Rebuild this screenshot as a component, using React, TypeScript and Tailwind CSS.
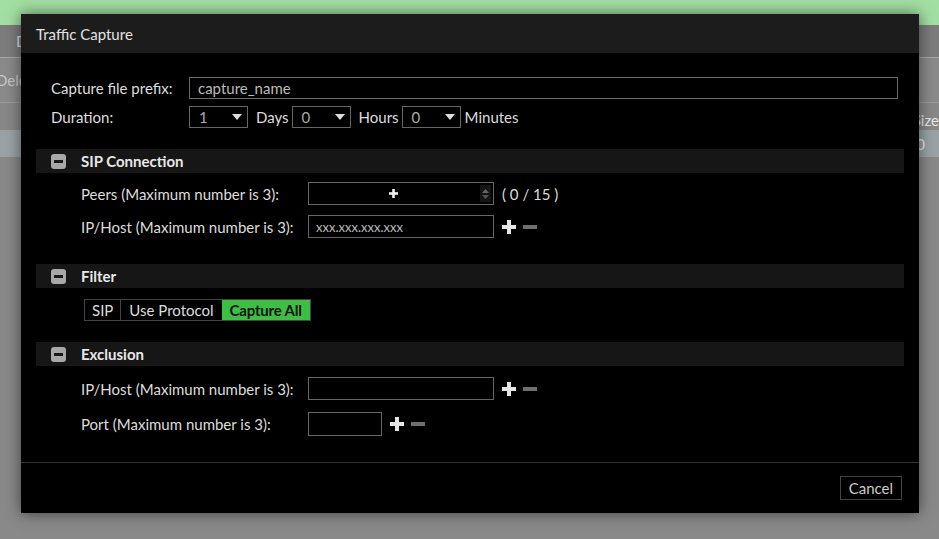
import React from 'react';

const font = { fontFamily: 'Lato, "Open Sans", sans-serif' };

function Caret() {
  return (
    <svg width="10" height="6" viewBox="0 0 10 6" className="text-[#ddd]">
      <path d="M0 0 L10 0 L5 6 Z" fill="currentColor" />
    </svg>
  );
}

function Select({ value }: { value: string }) {
  return (
    <div className="flex h-[22px] w-[59px] items-center justify-between border border-[#666] pl-[9px] pr-[5px] text-[#aaa]">
      <span>{value}</span>
      <Caret />
    </div>
  );
}

function PlusMinus() {
  return (
    <div className="ml-[8px] flex items-center gap-[7px]">
      <svg width="14" height="14" viewBox="0 0 14 14">
        <rect x="5" y="0" width="4" height="14" fill="#e5e5e5" />
        <rect x="0" y="5" width="14" height="4" fill="#e5e5e5" />
      </svg>
      <svg width="14" height="14" viewBox="0 0 14 14">
        <rect x="0" y="5" width="14" height="4" fill="#6f6f6f" />
      </svg>
    </div>
  );
}

function SectionHeader({ title }: { title: string }) {
  return (
    <div className="flex h-[24px] items-center bg-[#161616] pl-[15px]">
      <div className="flex h-[15px] w-[15px] items-center justify-center rounded-[3px] bg-[#a8a8a8]">
        <div className="h-[3px] w-[9px] bg-[#1a1a1a]" />
      </div>
      <span className="ml-[15px] font-bold text-[#e8e8e8]">{title}</span>
    </div>
  );
}

function Row({ label, children, className = '' }: { label: string; children: React.ReactNode; className?: string }) {
  return (
    <div className={`flex items-center pl-[45px] ${className}`}>
      <span className="w-[227px] text-[#ddd]">{label}</span>
      {children}
    </div>
  );
}

export default function App() {
  return (
    <div className="relative h-[539px] w-[939px] overflow-hidden bg-[#898989] text-[15px] leading-[20px]" style={font}>
      {/* page behind the overlay */}
      <div className="h-[25px] bg-[#a2dfa2]" />
      <div className="flex h-[32px] items-center bg-[#7c7c7c] pl-[16px] text-[#e0e0e0]">D</div>
      <div className="h-px bg-[#a9a9a9]" />
      <div className="flex h-[44px] items-center bg-[#8a8a8a] text-[#c8c8c8]">
        <span className="-ml-[4px]">Dele</span>
      </div>
      <div className="h-px bg-[#9c9c9c]" />
      <div className="flex h-[27px] items-end justify-end bg-[#888] text-[#e8e8e8]">
        <span>Size</span>
      </div>
      <div className="flex h-[27px] items-center justify-end bg-[#99a3a6] pr-[14px] text-[#e8e8e8]">
        <span>0</span>
      </div>

      {/* dialog */}
      <div className="absolute left-[21px] top-[14px] flex h-[499px] w-[898px] flex-col bg-black shadow-[0_0_14px_rgba(0,0,0,0.55)]">
        <div className="flex h-[39px] items-center bg-[#1c1c1c] pl-[15px] text-[#e2e2e2]">Traffic Capture</div>

        <div className="flex-1 px-[15px] pt-[24px]">
          <div className="flex items-center pl-[15px] pr-[6px]">
            <span className="w-[138px] text-[#ddd]">Capture file prefix:</span>
            <div className="flex h-[22px] flex-1 items-center border border-[#6a6a6a] pl-[8px] text-[#bbb]">capture_name</div>
          </div>
          <div className="mt-[7px] flex items-center pl-[15px] text-[#ddd]">
            <span className="w-[138px]">Duration:</span>
            <Select value="1" />
            <span className="ml-[8px] mr-[3px]">Days</span>
            <Select value="0" />
            <span className="ml-[8px] mr-[3px]">Hours</span>
            <Select value="0" />
            <span className="ml-[4px]">Minutes</span>
          </div>

          <div className="mt-[21px]">
            <SectionHeader title="SIP Connection" />
          </div>
          <Row label="Peers (Maximum number is 3):" className="mt-[9px]">
            <div className="relative flex h-[23px] w-[186px] items-center justify-center border border-[#666] pr-[16px]">
              <svg width="9" height="9" viewBox="0 0 9 9">
                <rect x="3.2" y="0" width="2.6" height="9" fill="#f0f0f0" />
                <rect x="0" y="3.2" width="9" height="2.6" fill="#f0f0f0" />
              </svg>
              <div className="absolute right-[2px] top-[2px] flex h-[17px] w-[11px] flex-col items-center justify-center gap-[2px] bg-[#151515]">
                <svg width="7" height="4" viewBox="0 0 7 4"><path d="M0 4 L7 4 L3.5 0 Z" fill="#666" /></svg>
                <svg width="7" height="4" viewBox="0 0 7 4"><path d="M0 0 L7 0 L3.5 4 Z" fill="#555" /></svg>
              </div>
            </div>
            <span className="ml-[8px] text-[#ddd]">( 0 / 15 )</span>
          </Row>
          <Row label="IP/Host (Maximum number is 3):" className="mt-[10px]">
            <div className="flex h-[23px] w-[186px] items-center border border-[#666] pl-[7px] text-[13px] text-[#bbb]">xxx.xxx.xxx.xxx</div>
            <PlusMinus />
          </Row>

          <div className="mt-[26px]">
            <SectionHeader title="Filter" />
          </div>
          <div className="mt-[11px] flex pl-[48px]">
            <div className="flex h-[22px] border border-[#444] text-[#ddd]">
              <span className="flex items-center border-r border-[#444] px-[7px]">SIP</span>
              <span className="flex items-center px-[8px]">Use Protocol</span>
              <span className="flex items-center bg-[#3cbf42] px-[8px] font-bold tracking-[-0.2px] text-[#111]">Capture All</span>
            </div>
          </div>

          <div className="mt-[21px]">
            <SectionHeader title="Exclusion" />
          </div>
          <Row label="IP/Host (Maximum number is 3):" className="mt-[11px]">
            <div className="h-[23px] w-[186px] border border-[#666]" />
            <PlusMinus />
          </Row>
          <Row label="Port (Maximum number is 3):" className="mt-[12px]">
            <div className="h-[24px] w-[74px] border border-[#666]" />
            <PlusMinus />
          </Row>
        </div>

        <div className="flex h-[51px] items-start justify-end border-t border-[#333] pr-[17px] pt-[13px]">
          <div className="flex h-[24px] items-center border border-[#444] px-[8px] text-[#ccc]">Cancel</div>
        </div>
      </div>
    </div>
  );
}
